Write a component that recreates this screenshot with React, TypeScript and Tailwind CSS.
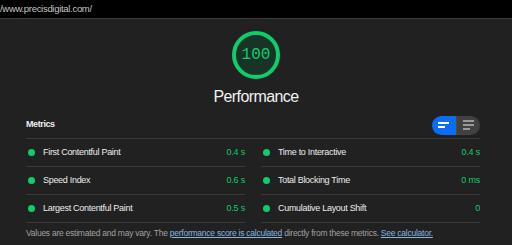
const metrics = [
  [
    { label: "First Contentful Paint", value: "0.4 s" },
    { label: "Speed Index", value: "0.6 s" },
    { label: "Largest Contentful Paint", value: "0.5 s" },
  ],
  [
    { label: "Time to Interactive", value: "0.4 s" },
    { label: "Total Blocking Time", value: "0 ms" },
    { label: "Cumulative Layout Shift", value: "0" },
  ],
];

function MetricRow({ label, value }: { label: string; value: string }) {
  return (
    <div className="flex items-center h-[28px] border-b border-[#3a3a3a]">
      <div className="w-[7px] h-[7px] rounded-full bg-[#0cce6b] ml-[2px] mr-[8px]" />
      <div className="flex-1 text-[9px] tracking-[-0.3px] text-[#ececec]">{label}</div>
      <div className="text-[9px] tracking-[-0.2px] text-[#0cce6b]">{value}</div>
    </div>
  );
}

export default function App() {
  return (
    <div className="w-[512px] h-[245px] bg-[#212121] overflow-hidden flex flex-col font-['Liberation_Sans',Arial,sans-serif]">
      <div className="h-[19px] bg-black border-b border-[#3c3c3c] text-[9.5px] tracking-[-0.3px] text-[#c4c4c4] leading-[16px] pt-[1px]">
        /www.precisdigital.com/
      </div>
      <div className="flex flex-col items-center pt-[12px]">
        <div className="w-[48px] h-[48px] rounded-full border-[4px] border-[#0cce6b] bg-[#1a3328] flex items-center justify-center">
          <span className="font-['Liberation_Mono',monospace] text-[16px] text-[#0cce6b] leading-none">100</span>
        </div>
        <div className="text-[16px] tracking-[-0.6px] text-[#f0f0f0] mt-[7px] leading-[22px]">Performance</div>
      </div>
      <div className="px-[26px] pt-[6px]">
        <div className="flex items-center justify-between h-[22px] border-b border-[#3a3a3a] pb-[2px] box-content mr-[6px]">
          <div className="text-[9px] tracking-[-0.4px] font-bold text-[#eeeeee]">Metrics</div>
          <div className="flex h-[19px] w-[48px] rounded-full overflow-hidden">
            <div className="flex-1 bg-[#0b6cf5] flex items-center justify-center border-r border-[#5a4a1a]">
              <div className="w-[11px] flex flex-col gap-[2px]">
                <div className="w-[11px] h-[2px] bg-white" />
                <div className="w-[7px] h-[2px] bg-white" />
              </div>
            </div>
            <div className="flex-1 bg-[#414141] flex items-center justify-center">
              <div className="w-[11px] flex flex-col gap-[2px]">
                <div className="w-[11px] h-[2px] bg-[#9a9a9a]" />
                <div className="w-[11px] h-[2px] bg-[#9a9a9a]" />
                <div className="w-[7px] h-[2px] bg-[#9a9a9a]" />
              </div>
            </div>
          </div>
        </div>
        <div className="flex gap-[16px] mr-[6px]">
          {metrics.map((col, i) => (
            <div key={i} className="flex-1">
              {col.map((m) => (
                <MetricRow key={m.label} label={m.label} value={m.value} />
              ))}
            </div>
          ))}
        </div>
        <div className="text-[8.5px] tracking-[-0.25px] text-[#a0a0a0] mt-[4px] whitespace-nowrap">
          Values are estimated and may vary. The{" "}
          <span className="text-[#8ab4e0] underline">performance score is calculated</span> directly from these
          metrics. <span className="text-[#8ab4e0] underline">See calculator.</span>
        </div>
      </div>
    </div>
  );
}
